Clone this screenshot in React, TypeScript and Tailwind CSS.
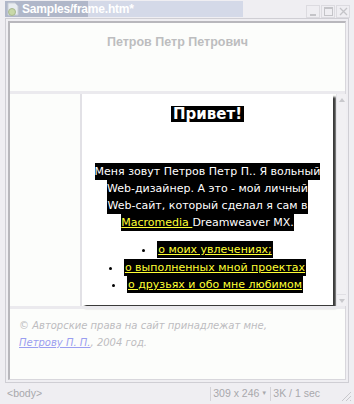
import React from "react";

export default function App() {
  const sans = { fontFamily: '"DejaVu Sans", Verdana, sans-serif' };
  const lib = { fontFamily: '"Liberation Sans", Arial, sans-serif' };
  return (
    <div className="w-[354px] h-[404px] bg-[#efeef2] flex flex-col overflow-hidden relative" style={sans}>
      {/* title bar */}
      <div className="h-[18px] flex items-start shrink-0">
        <div className="ml-[5px] mt-[1px] w-[238px] h-[16px] bg-[linear-gradient(to_right,#b0b7c9_0px,#b0b7c9_83px,#d4d9e8_83px)] flex items-center pl-[2px] gap-[2px]">
          <svg width="13" height="14" viewBox="0 0 13 14">
            <path d="M1 1h7l3 3v9H1z" fill="#e8ecf0" stroke="#c9cdd6" />
            <circle cx="5" cy="10" r="3.5" fill="#c8d8a8" stroke="#a8b890" />
          </svg>
          <span className="text-[12px] font-bold text-white leading-none tracking-[-0.2px]" style={lib}>
            Samples/frame.htm*
          </span>
        </div>
        <div className="ml-auto mr-[4px] mt-[5px] flex gap-[1px]">
          {[0, 1, 2].map((i) => (
            <div key={i} className="w-[14px] h-[13px] border border-[#dcdbe0] bg-[#efeef2] flex items-center justify-center text-[#c4c4c8] leading-none">
              {i === 0 ? (
                <div className="w-[6px] h-[2px] bg-[#c4c4c8] mt-[6px]" />
              ) : i === 1 ? (
                <div className="w-[9px] h-[9px] border border-[#c4c4c8] border-t-2" />
              ) : (
                <svg width="9" height="9" viewBox="0 0 9 9">
                  <path d="M1 1L8 8M8 1L1 8" stroke="#c4c4c8" strokeWidth="1.3" />
                </svg>
              )}
            </div>
          ))}
        </div>
      </div>

      {/* document area */}
      <div className="mx-[5px] h-[365px] border border-[#cfced4] p-[2px] shrink-0">
        <div className="h-full border-t-2 border-l-2 border-[#b8b7bc] border-r border-b border-r-[#d8d7dc] border-b-[#d8d7dc] flex flex-col bg-[#fcfdfb]">
          {/* top frame */}
          <div className="h-[68px] shrink-0 flex justify-center pt-[10px]">
            <span className="text-[12.5px] font-bold text-[#bdbdbf]" style={lib}>
              Петров Петр Петрович
            </span>
          </div>
          <div className="h-[3px] bg-[#ebeaee] shrink-0" />
          {/* middle row */}
          <div className="h-[212px] shrink-0 flex">
            <div className="w-[70px] shrink-0" />
            <div className="w-[2px] bg-[#e2e1e6] shrink-0" />
            <div className="flex-1 flex">
              <div className="w-[251px] h-[211px] bg-white shadow-[3px_3px_2px_#3a3a3a] text-center">
                <div className="mt-[8px]">
                  <span className="inline-block bg-black text-white font-bold text-[15px] leading-[16px] px-[2px]" style={sans}>
                    Привет!
                  </span>
                </div>
                <p className="mt-[37px] text-[11px] leading-[17px] text-white">
                  <span className="bg-black py-[2px]">
                    Меня зовут Петров Петр П.. Я вольный
                    <br />
                    Web-дизайнер. А это - мой личный
                    <br />
                    Web-сайт, который сделал я сам в
                    <br />
                    <span className="text-[#ffff33] underline">Macromedia </span>Dreamweaver MX.
                  </span>
                </p>
                <ul className="mt-[10px] text-[11px] leading-[17.5px] list-disc list-inside text-black">
                  <li>
                    <span className="bg-black text-[#ffff33] underline py-[2px] px-[1px]">о моих увлечениях;</span>
                  </li>
                  <li>
                    <span className="bg-black text-[#ffff33] underline py-[2px] px-[1px]">о выполненных мной проектах</span>
                  </li>
                  <li>
                    <span className="bg-black text-[#ffff33] underline py-[2px] px-[1px]">о друзьях и обо мне любимом</span>
                  </li>
                </ul>
              </div>
              <div className="w-[3px]" />
              {/* scrollbar */}
              <div className="w-[10px] flex flex-col bg-[#f1f0f3] border-l border-[#e4e3e8]">
                <div className="h-[12px] flex items-center justify-center">
                  <div className="w-0 h-0 border-l-[3px] border-r-[3px] border-b-[4px] border-l-transparent border-r-transparent border-b-[#c8c8cc]" />
                </div>
                <div className="flex-1" />
                <div className="h-[12px] flex items-center justify-center border-t border-[#e0dfe4]">
                  <div className="w-0 h-0 border-l-[3px] border-r-[3px] border-t-[4px] border-l-transparent border-r-transparent border-t-[#c8c8cc]" />
                </div>
              </div>
            </div>
          </div>
          <div className="h-[3px] bg-[#ebeaee] shrink-0" />
          {/* bottom frame */}
          <div className="flex-1 pl-[9px] pt-[8px] text-[10px] leading-[17px] italic text-[#bcbcc0]">
            © Авторские права на сайт принадлежат мне,
            <br />
            <span className="text-[#9a9ef0] underline">Петрову П. П.</span>, 2004 год.
          </div>
        </div>
      </div>

      {/* status bar */}
      <div className="flex-1 flex items-center text-[10.5px] text-[#a8a8ac] pl-[7px]" style={lib}>
        <span>&lt;body&gt;</span>
        <div className="ml-auto flex items-center h-[14px] mr-[32px]">
          <div className="border-l border-[#d4d3d8] pl-[2px] pr-[3px] flex items-center gap-[2px] h-full">
            309 x 246
            <span className="text-[6px]">▼</span>
          </div>
          <div className="border-l border-[#d4d3d8] pl-[2px] pr-[2px] h-full flex items-center">3K / 1 sec</div>
        </div>
        <svg className="absolute left-[340px] top-[390px]" width="12" height="12" viewBox="0 0 12 12">
          <path d="M11 2L2 11M11 6L6 11M11 10L10 11" stroke="#c8c8cc" strokeWidth="1" />
        </svg>
      </div>
    </div>
  );
}
